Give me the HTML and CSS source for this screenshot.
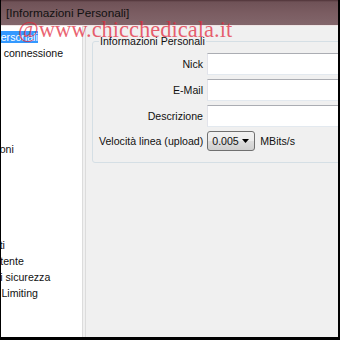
FILE: index.html
```html
<!DOCTYPE html>
<html lang="it">
<head>
  <meta charset="UTF-8" />
  <title>Informazioni Personali</title>
  <link rel="stylesheet" href="styles.css">
</head>
<body>

<div class="window">
  <div class="titlebar">[Informazioni Personali]</div>

  <div class="content">
    <div class="tree">
      <ul>
        <li><span class="selected">Informazioni Personali</span></li>
        <li><span>Configurazioni connessione</span></li>
        <li><span>Download</span></li>
        <li><span>Preferiti</span></li>
        <li><span>Coda</span></li>
        <li><span>Condivisi</span></li>
        <li><span>Aspetto</span></li>
        <li class="sub"><span>Colori e suoni</span></li>
        <li class="sub"><span>Finestre</span></li>
        <li class="sub"><span>Schede</span></li>
        <li class="sub"><span>Notifiche</span></li>
        <li><span>Avanzate</span></li>
        <li class="sub"><span>Log</span></li>
        <li class="sub"><span>Solo esperti</span></li>
        <li class="sub"><span>Comandi utente</span></li>
        <li class="sub"><span>Controllo di sicurezza</span></li>
        <li class="sub"><span>Bandwidth Limiting</span></li>
      </ul>
    </div>
    <div class="splitter"></div>

    <div class="panel">
      <fieldset class="group">
        <legend>Informazioni Personali</legend>
        <div class="form">
          <label>Nick</label>
          <input type="text" />
          <label>E-Mail</label>
          <input type="text" />
          <label>Descrizione</label>
          <input type="text" />
        </div>
        <div class="speed">
          <span>Velocità linea (upload)</span>
          <div class="combo">
            <span>0.005</span>
            <svg width="7" height="4" viewBox="0 0 7 4"><polygon points="0,0 7,0 3.5,4" fill="#000"/></svg>
          </div>
          <span class="unit">MBits/s</span>
        </div>
      </fieldset>
    </div>
  </div>

  <div class="watermark">@www.chicchedicala.it</div>
</div>

</body>
</html>
```

FILE: styles.css
```css
body {
  margin: 0;
  background: #000;
  font-family: "Liberation Sans", Arial, sans-serif;
  font-size: 10.6px;
  color: #111;
}
.window {
  position: relative;
  margin: 0 2px 3px 1px;
  height: 337px;
  display: flex;
  flex-direction: column;
  overflow: hidden;
  background: #f0f0f0;
}
.titlebar {
  flex: none;
  height: 25px;
  padding-left: 5px;
  display: flex;
  align-items: center;
  font-size: 11.8px;
  color: #111;
  background: linear-gradient(#4e3237 0, #6f5257 2px, #7a5c61 50%, #82666b 100%);
  border-bottom: 1px solid #efe5e5;
}
.content {
  flex: 1;
  display: flex;
  min-height: 0;
}
.tree {
  width: 81px;
  background: #fff;
  border-right: 1px solid #dcdcdc;
  overflow: hidden;
  padding-top: 4px;
}
.tree ul {
  margin: 0 0 0 -68px;
  padding: 0;
  list-style: none;
}
.tree li {
  height: 16px;
  white-space: nowrap;
  display: flex;
  align-items: flex-start;
}
.tree li span {
  line-height: 12px;
  margin-top: 1px;
}
.tree li.sub {
  padding-left: 16px;
}
.tree .selected {
  background: #3399ff;
  color: #fff;
}
.splitter {
  width: 2px;
  border-right: 1px solid #dcdcdc;
  background: #f0f0f0;
}
.panel {
  flex: 1;
  overflow: hidden;
  padding: 9px 0 0 6px;
}
.group {
  margin: 0;
  width: 300px;
  padding: 6px 0 11px 6px;
  border: 1px solid #d5dfe5;
  border-radius: 3px;
}
.group legend {
  padding: 0 1px;
  line-height: 12px;
  color: #111;
}
.form {
  display: grid;
  grid-template-columns: 104px 1fr;
  gap: 4px;
  align-items: center;
}
.form label {
  text-align: right;
}
.form input {
  height: 22px;
  box-sizing: border-box;
  margin: 0;
  border: 1px solid;
  border-color: #abadb3 #dbdfe6 #e3e9ef #e2e3ea;
  background: #fff;
}
.speed {
  display: flex;
  align-items: center;
  gap: 4px;
  margin-top: 4px;
}
.combo {
  width: 48px;
  height: 20px;
  box-sizing: border-box;
  padding: 0 5px 0 4px;
  border: 1px solid #707070;
  border-radius: 3px;
  background: linear-gradient(#f2f2f2 0, #ebebeb 50%, #dddddd 50%, #cfcfcf 100%);
  display: flex;
  align-items: center;
  justify-content: space-between;
}
.unit {
  margin-left: 1px;
}
.watermark {
  position: absolute;
  top: 19px;
  left: 17px;
  font-family: "Liberation Serif", "Times New Roman", serif;
  font-size: 22.5px;
  line-height: 22px;
  color: rgba(226, 38, 58, 0.72);
  pointer-events: none;
  white-space: nowrap;
}
```
